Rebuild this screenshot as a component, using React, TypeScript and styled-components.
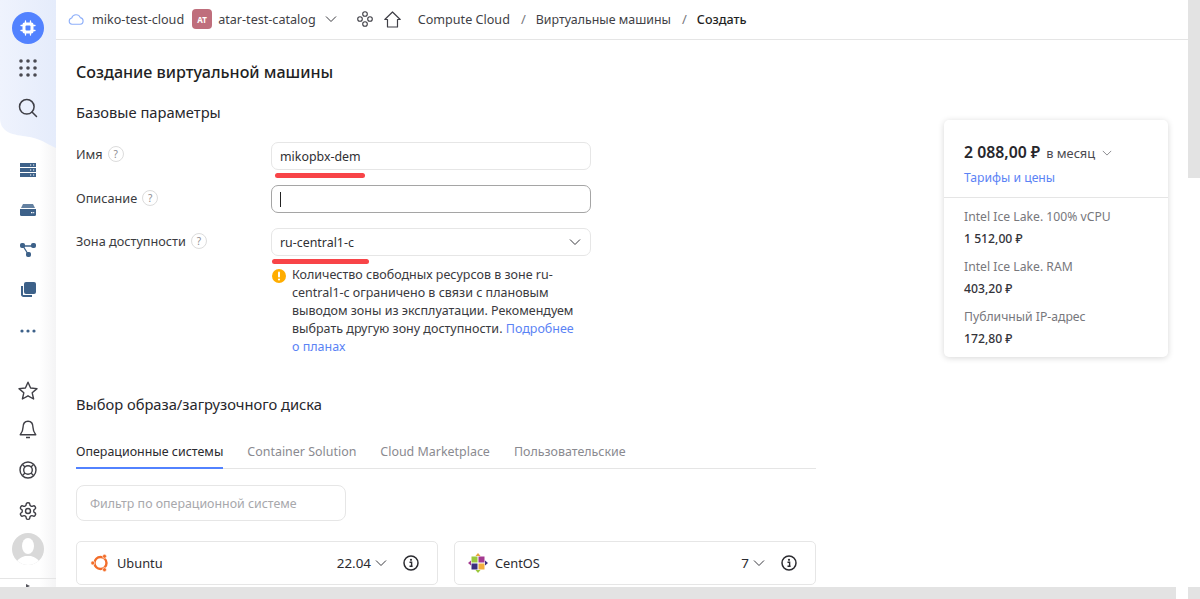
import React from "react";
import styled, { createGlobalStyle } from "styled-components";

const Global = createGlobalStyle`
  html, body { margin: 0; padding: 0; height: 100%; overflow: hidden; background: #fff; }
  #root { height: 100%; }
  * { box-sizing: border-box; }
`;

const FONT = `"Noto Sans", "Open Sans", "Liberation Sans", sans-serif`;

const Page = styled.div`
  position: relative; width: 1200px; height: 599px; overflow: hidden; display: flex;
  font-family: ${FONT}; font-size: 13px; color: #27272c; background: #fff;
`;
const Rail = styled.nav`
  position: relative; flex: 0 0 56px; width: 56px; height: 599px; display: flex; flex-direction: column; align-items: center;
  background: linear-gradient(90deg, #fff 70%, #f4f4f5 100%); z-index: 1;
`;
const RailTop = styled.svg`
  position: absolute; left: 0; top: 0; width: 56px; height: 150px; z-index: -1;
`;
const RailSlot = styled.div<{ $h: number; $mt?: number }>`
  height: ${p => p.$h}px; margin-top: ${p => p.$mt ?? 0}px; width: 100%; display: flex; align-items: center; justify-content: center; flex: none;
`;
const LogoBubble = styled.div`
  width: 32px; height: 32px; border-radius: 50%; background: #5282ff; display: flex; align-items: center; justify-content: center;
`;
const Avatar = styled.div`
  width: 32px; height: 32px; border-radius: 50%; background: #d9d9d9; overflow: hidden; display: flex;
`;
const RailFoot = styled.div`
  position: absolute; left: 0; top: 578px; width: 56px; height: 9px; border-top: 1px solid #e5e5e5; display: flex; justify-content: center;
  padding-top: 5px;
`;
const Tick = styled.span`
  width: 0; height: 0; border-left: 4px solid #55555c; border-top: 2px solid transparent; border-bottom: 2px solid transparent;
`;
const Main = styled.div`
  flex: 1; min-width: 0; display: flex; flex-direction: column;
`;
const TopBar = styled.header`
  height: 40px; flex: none; display: flex; align-items: center; border-bottom: 1px solid #e5e5e5; padding-left: 12px; padding-bottom: 1px;
`;
const Crumb = styled.span<{ $strong?: boolean; $size?: number }>`
  font-size: ${p => p.$size ?? 12.6}px; color: ${p => p.$strong ? "#1f1f24" : "#3f3f46"}; white-space: nowrap; font-weight: ${p => p.$strong ? 500 : 400};
`;
const Sep = styled.span`
  margin: 0 10px 0 11px; color: #77777c; font-size: 13px;
`;
const Badge = styled.span`
  width: 20px; height: 20px; border-radius: 4px; background: #bf6e7c; color: #fff; font-size: 8px; font-weight: 700;
  display: flex; align-items: center; justify-content: center; margin: 0 6px 0 8px;
`;
const ChevronBox = styled.span<{ $ml?: number; $mr?: number }>`
  display: flex; margin: 0 ${p => p.$mr ?? 0}px 0 ${p => p.$ml ?? 0}px;
`;
const Content = styled.div`
  position: relative; flex: 1; padding: 21px 0 0 20px; min-height: 0;
`;
const Title = styled.h1`
  margin: 0; font-size: 16.1px; line-height: 22px; font-weight: 500; color: #1f1f24;
`;
const Section = styled.h2<{ $mt: number }>`
  margin: ${p => p.$mt}px 0 0; font-size: 14.7px; line-height: 20px; font-weight: 400; color: #27272c;
`;
const Form = styled.div`
  margin-top: 20px; width: 515px; display: flex; flex-direction: column;
`;
const Row = styled.div<{ $mb: number }>`
  display: grid; grid-template-columns: 195px 320px; margin-bottom: ${p => p.$mb}px;
`;
const Label = styled.div<{ $dy?: number }>`
  display: flex; align-items: center; gap: 5px; height: 20px; margin-top: ${p => p.$dy ?? 0}px; font-size: 12.7px; color: #3b3b40;
`;
const Help = styled.span`
  width: 16px; height: 16px; border-radius: 50%; border: 1px solid #dcdcdc; color: #8c8c90; font-size: 10px;
  display: flex; align-items: center; justify-content: center; line-height: 1;
`;
const Field = styled.div<{ $focus?: boolean }>`
  position: relative; height: 28px; width: 320px; border-radius: 7px; border: 1px solid ${p => p.$focus ? "#a5a5a5" : "#e6e6e6"};
  display: flex; align-items: center; justify-content: space-between; padding: 0 9px 0 8px; font-size: 12.4px; color: #2f2f34; background: #fff;
`;
const Caret = styled.span`
  width: 1px; height: 15px; background: #222;
`;
const Underline = styled.span<{ $l: number; $w: number }>`
  position: absolute; left: ${p => p.$l}px; top: 30px; width: ${p => p.$w}px; height: 5px; border-radius: 3px; background: #f84448;
`;
const Warn = styled.div`
  display: flex; gap: 5px; margin-top: 11px; font-size: 12.5px; line-height: 18px; color: #3a3a40;
`;
const WarnIcon = styled.svg`
  flex: none; margin-top: 1px;
`;
const WarnText = styled.div`
  width: 298px; margin-top: -1px;
`;
const Link = styled.a`
  color: #5b83f5; text-decoration: none;
`;
const Tabs = styled.div`
  margin-top: 22px; width: 740px; display: flex; gap: 24px; height: 33px; border-bottom: 1px solid #e5e5e5;
`;
const Tab = styled.div<{ $active?: boolean }>`
  font-size: 12.45px; line-height: 18px; color: ${p => p.$active ? "#2b2b30" : "#8a8a90"}; height: 33px; padding-top: 7px;
  border-bottom: ${p => p.$active ? "2px solid #5282ff" : "none"};
`;
const Filter = styled.div`
  margin-top: 16px; width: 270px; height: 36px; border-radius: 8px; border: 1px solid #e6e6e6; padding: 0 13px;
  display: flex; align-items: center; font-size: 12.4px; color: #a8a8ac;
`;
const Cards = styled.div`
  margin-top: 20px; width: 740px; display: grid; grid-template-columns: 362px 362px; column-gap: 16px;
`;
const Card = styled.div`
  height: 44px; border: 1px solid #e6e6e6; border-radius: 5px; display: flex; align-items: center; padding: 0 18px 0 13px; background: #fff;
`;
const CardName = styled.span`
  margin-left: 7px; flex: 1; font-size: 12.8px; color: #2b2b30;
`;
const CardVer = styled.span`
  font-size: 13.4px; color: #2b2b30; margin-right: 4px;
`;
const InfoBox = styled.span`
  display: flex; margin-left: 16px;
`;
const Price = styled.aside`
  position: absolute; left: 888px; top: 80px; width: 224px; height: 237px; border-radius: 5px; background: #fff;
  box-shadow: 0 1px 6px rgba(0,0,0,.16);
`;
const PriceHead = styled.div`
  height: 78px; padding: 20px 20px 0; border-bottom: 1px solid #e5e5e5;
`;
const Total = styled.div`
  display: flex; align-items: baseline; line-height: 24px; font-size: 15.8px; font-weight: 600; color: #27272c;
`;
const Per = styled.span`
  font-size: 12.8px; font-weight: 400; color: #4a4a50; margin: 0 7px 0 6px;
`;
const PriceLink = styled.div`
  margin-top: 4px; font-size: 12.2px; line-height: 18px; color: #5b83f5;
`;
const PriceBody = styled.div`
  padding: 10px 20px 0;
`;
const ItemName = styled.div`
  font-size: 12.2px; line-height: 18px; color: #77777c;
`;
const ItemVal = styled.div`
  font-size: 12.2px; line-height: 18px; margin-top: 4px; margin-bottom: 10px; color: #33333a; font-weight: 500;
`;
const ScrollV = styled.div`
  position: absolute; right: 0; top: 0; width: 12px; height: 178px; background: #e3e3e3;
`;
const ScrollH = styled.div`
  position: absolute; left: 0; bottom: 0; width: 1176px; height: 12px; background: #e3e3e3; z-index: 3;
`;
const ScrollCorner = styled.div`
  position: absolute; right: 0; bottom: 0; width: 12px; height: 12px; background: #e3e3e3; z-index: 3;
`;

const Chevron = ({ size = 12, c = "#3b3b40" }: { size?: number; c?: string }) => (
  <svg width={size} height={size} viewBox="0 0 12 12" fill="none"><path d="M1 3.5 6 8.5 11 3.5" stroke={c} strokeWidth="1" /></svg>
);
const Info = () => (
  <svg width="16" height="16" viewBox="0 0 16 16" fill="none">
    <circle cx="8" cy="8" r="7" stroke="#2b2b30" strokeWidth="1.5" />
    <circle cx="8" cy="4.8" r="1.1" fill="#2b2b30" />
    <path d="M6.5 7.2H8.600V11M6.500 11.200H9.600" stroke="#2b2b30" strokeWidth="1.400" />
  </svg>
);
const Ubuntu = () => (
  <svg width="20" height="20" viewBox="0 0 20 20" fill="none">
    <circle cx="10.500" cy="10" r="6" stroke="#f26d2a" strokeWidth="2.400" />
    <circle cx="2.800" cy="10" r="2" fill="#f26d2a" stroke="#fff" strokeWidth=".6" />
    <circle cx="14.500" cy="3.300" r="2" fill="#f26d2a" stroke="#fff" strokeWidth=".6" />
    <circle cx="14.500" cy="16.700" r="2" fill="#f26d2a" stroke="#fff" strokeWidth=".6" />
  </svg>
);
const CentOS = () => (
  <svg width="20" height="20" viewBox="0 0 20 20">
    <path d="M10 0 12.500 3H7.500Z" fill="#e8a33a" />
    <path d="M20 10 17 12.500V7.500Z" fill="#3c2f7f" />
    <path d="M10 20 7.500 17H12.500Z" fill="#9cc83c" />
    <path d="M0 10 3 7.500V12.500Z" fill="#a43a90" />
    <rect x="3.500" y="3.500" width="6" height="6" fill="#9cc83c" />
    <rect x="10.500" y="3.500" width="6" height="6" fill="#a43a90" />
    <rect x="3.500" y="10.500" width="6" height="6" fill="#3c2f7f" />
    <rect x="10.500" y="10.500" width="6" height="6" fill="#f2ae3d" />
  </svg>
);

const Stroke = "#3f3f46";
const Blue = "#3d6189";

export default function App() {
  return (
    <>
      <Global />
      <Page>
        <Rail>
          <RailTop viewBox="0 0 56 150" preserveAspectRatio="none">
            <defs>
              <linearGradient id="railBg" x1="0" x2="1" y1="0" y2="0">
                <stop offset="0" stopColor="#eff3fd" />
                <stop offset="1" stopColor="#e5ecfb" />
              </linearGradient>
            </defs>
            <path d="M0 0H56V148C50 146 44 140 30 137C18 135 0 135 0 118Z" fill="url(#railBg)" />
          </RailTop>
          <RailSlot $h={32} $mt={12}>
            <LogoBubble>
              <svg width="16" height="16" viewBox="0 0 16 16" fill="none">
                <rect x="2.500" y="2.500" width="11" height="11" rx="2" fill="#fff" />
                <rect x="5.500" y="5.500" width="5" height="5" rx="1" fill="#5282ff" />
                <path d="M5.500 1v2M10.500 1v2M5.500 13v2M10.500 13v2M1 5.500h2M1 10.500h2M13 5.500h2M13 10.500h2" stroke="#fff" strokeWidth="1.300" strokeLinecap="round" />
              </svg>
            </LogoBubble>
          </RailSlot>
          <RailSlot $h={36} $mt={6}>
            <svg width="18" height="18" viewBox="0 0 18 18" fill="#4a4a52">
              {[2, 9, 16].flatMap(y => [2, 9, 16].map(x => <circle key={`${x}${y}`} cx={x} cy={y} r="1.800" />))}
            </svg>
          </RailSlot>
          <RailSlot $h={36} $mt={4}>
            <svg width="20" height="20" viewBox="0 0 20 20" fill="none" stroke="#3f3f46" strokeWidth="1.500">
              <circle cx="8.800" cy="8.800" r="7.300" /><path d="M14 14 18.500 18.500" strokeLinecap="round" />
            </svg>
          </RailSlot>
          <RailSlot $h={20} $mt={34}>
            <svg width="16" height="14" viewBox="0 0 16 14" fill={Blue}>
              <path d="M0 0h16v4H0zM0 5h16v4H0zM0 10h16v4H0z" />
              <path d="M10 1.500h1.200v1H10zM13 1.500h1.200v1H13zM10 6.500h1.200v1H10zM13 6.500h1.200v1H13zM10 11.500h1.200v1H10zM13 11.500h1.200v1H13z" fill="#fff" />
            </svg>
          </RailSlot>
          <RailSlot $h={20} $mt={20}>
            <svg width="16" height="12" viewBox="0 0 16 12" fill={Blue}>
              <path d="M3 0h10l2 4H1z" opacity=".8" /><path d="M0 5h16v5.500a1.500 1.500 0 0 1-1.500 1.500h-13A1.500 1.500 0 0 1 0 10.500z" />
              <path d="M11 8h1.500v1.200H11zM13.200 8h1v1.200h-1z" fill="#fff" />
            </svg>
          </RailSlot>
          <RailSlot $h={20} $mt={20}>
            <svg width="16" height="14" viewBox="0 0 16 14" fill={Blue} stroke={Blue}>
              <path d="M3 3H13M3 3 8 11" strokeWidth="1.300" fill="none" />
              <rect x=".5" y=".5" width="4" height="4" rx="1" /><rect x="11.500" y=".5" width="4" height="4" rx="1" /><rect x="6.500" y="9.500" width="4" height="4" rx="1" />
            </svg>
          </RailSlot>
          <RailSlot $h={20} $mt={20}>
            <svg width="16" height="16" viewBox="0 0 16 16" fill={Blue}>
              <rect x="4" y="0" width="12" height="12" rx="2" />
              <path d="M2 4v8.500A1.500 1.500 0 0 0 3.500 14H12" stroke={Blue} strokeWidth="2" fill="none" />
            </svg>
          </RailSlot>
          <RailSlot $h={20} $mt={21}>
            <svg width="16" height="4" viewBox="0 0 16 4" fill={Blue}><circle cx="2" cy="2" r="1.600" /><circle cx="8" cy="2" r="1.600" /><circle cx="14" cy="2" r="1.600" /></svg>
          </RailSlot>
          <RailSlot $h={22} $mt={38}>
            <svg width="20" height="19" viewBox="0 0 20 19" fill="none" stroke={Stroke} strokeWidth="1.400" strokeLinejoin="round">
              <path d="M10 1.200 12.600 7 19 7.600 14.200 11.800 15.600 18 10 14.800 4.400 18 5.800 11.800 1 7.600 7.400 7Z" />
            </svg>
          </RailSlot>
          <RailSlot $h={22} $mt={18}>
            <svg width="18" height="20" viewBox="0 0 18 20" fill="none" stroke={Stroke} strokeWidth="1.400" strokeLinejoin="round">
              <path d="M9 1.200C5.500 1.200 4 4 4 7.500 4 11 2.800 12.500 1.200 14.800H16.800C15.200 12.500 14 11 14 7.500 14 4 12.500 1.200 9 1.200ZM7 17.500H11" />
            </svg>
          </RailSlot>
          <RailSlot $h={22} $mt={18}>
            <svg width="18" height="18" viewBox="0 0 18 18" fill="none" stroke={Stroke} strokeWidth="1.400">
              <circle cx="9" cy="9" r="8" /><circle cx="9" cy="9" r="4.300" />
              <path d="M3.500 3.500 6 6M14.500 3.500 12 6M3.500 14.500 6 12M14.500 14.500 12 12" />
            </svg>
          </RailSlot>
          <RailSlot $h={22} $mt={19}>
            <svg width="20" height="20" viewBox="0 0 24 24" fill="none" stroke={Stroke} strokeWidth="1.700" strokeLinecap="round" strokeLinejoin="round">
              <path d="M12.220 2h-.44a2 2 0 0 0-2 2v.18a2 2 0 0 1-1 1.730l-.43.250a2 2 0 0 1-2 0l-.15-.080a2 2 0 0 0-2.730.730l-.22.380a2 2 0 0 0 .730 2.730l.15.100a2 2 0 0 1 1 1.720v.510a2 2 0 0 1-1 1.740l-.15.090a2 2 0 0 0-.730 2.730l.22.380a2 2 0 0 0 2.730.730l.15-.080a2 2 0 0 1 2 0l.43.250a2 2 0 0 1 1 1.730V20a2 2 0 0 0 2 2h.44a2 2 0 0 0 2-2v-.18a2 2 0 0 1 1-1.730l.43-.250a2 2 0 0 1 2 0l.15.080a2 2 0 0 0 2.730-.730l.22-.390a2 2 0 0 0-.730-2.730l-.15-.080a2 2 0 0 1-1-1.740v-.500a2 2 0 0 1 1-1.740l.15-.090a2 2 0 0 0 .730-2.730l-.22-.380a2 2 0 0 0-2.730-.730l-.15.080a2 2 0 0 1-2 0l-.43-.250a2 2 0 0 1-1-1.730V4a2 2 0 0 0-2-2z" />
              <circle cx="12" cy="12" r="3" />
            </svg>
          </RailSlot>
          <RailSlot $h={32} $mt={11}>
            <Avatar>
              <svg width="32" height="32" viewBox="0 0 32 32" fill="#fff">
                <ellipse cx="16" cy="13" rx="6" ry="8" /><path d="M4 32c0-6 6-8 9-9h6c3 1 9 3 9 9z" />
              </svg>
            </Avatar>
          </RailSlot>
          <RailFoot><Tick /></RailFoot>
        </Rail>
        <Main>
          <TopBar>
            <svg width="16" height="12" viewBox="0 0 16 12" fill="none" style={{ marginRight: 8 }}>
              <path d="M4 11.300A3.200 3.200 0 0 1 3.700 5 4.600 4.600 0 0 1 12.300 4.600 3.400 3.400 0 0 1 12.300 11.300Z" stroke="#8fb0fa" strokeWidth="1.100" />
            </svg>
            <Crumb>miko-test-cloud</Crumb>
            <Badge>AT</Badge>
            <Crumb>atar-test-catalog</Crumb>
            <ChevronBox $ml={9} $mr={20}><Chevron /></ChevronBox>
            <svg width="16" height="16" viewBox="0 0 16 16" fill="none" stroke="#3f3f46" strokeWidth="1.100" style={{ marginRight: 11 }}>
              <circle cx="8" cy="3" r="2.300" /><circle cx="3" cy="8" r="2.300" /><circle cx="13" cy="8" r="2.300" /><circle cx="8" cy="13" r="2.300" />
            </svg>
            <svg width="17" height="17" viewBox="0 0 17 17" fill="none" stroke="#3f3f46" strokeWidth="1.200" style={{ marginRight: 17 }}>
              <path d="M.8 8.500 8.500 1 16.200 8.500H13.500V16H3.500V8.500Z" strokeLinejoin="round" />
            </svg>
            <Crumb>Compute Cloud</Crumb>
            <Sep>/</Sep>
            <Crumb $size={12.4}>Виртуальные машины</Crumb>
            <Sep>/</Sep>
            <Crumb $strong>Создать</Crumb>
          </TopBar>
          <Content>
            <Title>Создание виртуальной машины</Title>
            <Section $mt={19}>Базовые параметры</Section>
            <Form>
              <Row $mb={15}>
                <Label $dy={2}>Имя <Help>?</Help></Label>
                <Field>mikopbx-dem<Underline $l={3} $w={90} /></Field>
              </Row>
              <Row $mb={15}>
                <Label $dy={3}>Описание <Help>?</Help></Label>
                <Field $focus><Caret /></Field>
              </Row>
              <Row $mb={0}>
                <Label $dy={3}>Зона доступности <Help>?</Help></Label>
                <div>
                  <Field>ru-central1-c<Chevron /><Underline $l={0} $w={97} /></Field>
                  <Warn>
                    <WarnIcon width="16" height="16" viewBox="0 0 16 16">
                      <circle cx="8" cy="8" r="7" fill="#ffad00" />
                      <rect x="7" y="3.500" width="2" height="6" rx="1" fill="#fff" /><circle cx="8" cy="11.500" r="1.100" fill="#fff" />
                    </WarnIcon>
                    <WarnText>
                      Количество свободных ресурсов в зоне ru-<br />central1-c ограничено в связи с плановым<br />выводом зоны из эксплуатации. Рекомендуем<br />выбрать другую зону доступности. <Link>Подробнее<br />о планах</Link>
                    </WarnText>
                  </Warn>
                </div>
              </Row>
            </Form>
            <Section $mt={38}>Выбор образа/загрузочного диска</Section>
            <Tabs>
              <Tab $active>Операционные системы</Tab>
              <Tab>Container Solution</Tab>
              <Tab>Cloud Marketplace</Tab>
              <Tab>Пользовательские</Tab>
            </Tabs>
            <Filter>Фильтр по операционной системе</Filter>
            <Cards>
              <Card><Ubuntu /><CardName>Ubuntu</CardName><CardVer>22.04</CardVer><Chevron /><InfoBox><Info /></InfoBox></Card>
              <Card><CentOS /><CardName>CentOS</CardName><CardVer>7</CardVer><Chevron /><InfoBox><Info /></InfoBox></Card>
            </Cards>
            <Price>
              <PriceHead>
                <Total>2 088,00 ₽<Per>в месяц</Per><Chevron size={10} c="#77777c" /></Total>
                <PriceLink>Тарифы и цены</PriceLink>
              </PriceHead>
              <PriceBody>
                <ItemName>Intel Ice Lake. 100% vCPU</ItemName>
                <ItemVal>1 512,00 ₽</ItemVal>
                <ItemName>Intel Ice Lake. RAM</ItemName>
                <ItemVal>403,20 ₽</ItemVal>
                <ItemName>Публичный IP-адрес</ItemName>
                <ItemVal>172,80 ₽</ItemVal>
              </PriceBody>
            </Price>
          </Content>
        </Main>
        <ScrollV />
        <ScrollH />
        <ScrollCorner />
      </Page>
    </>
  );
}
